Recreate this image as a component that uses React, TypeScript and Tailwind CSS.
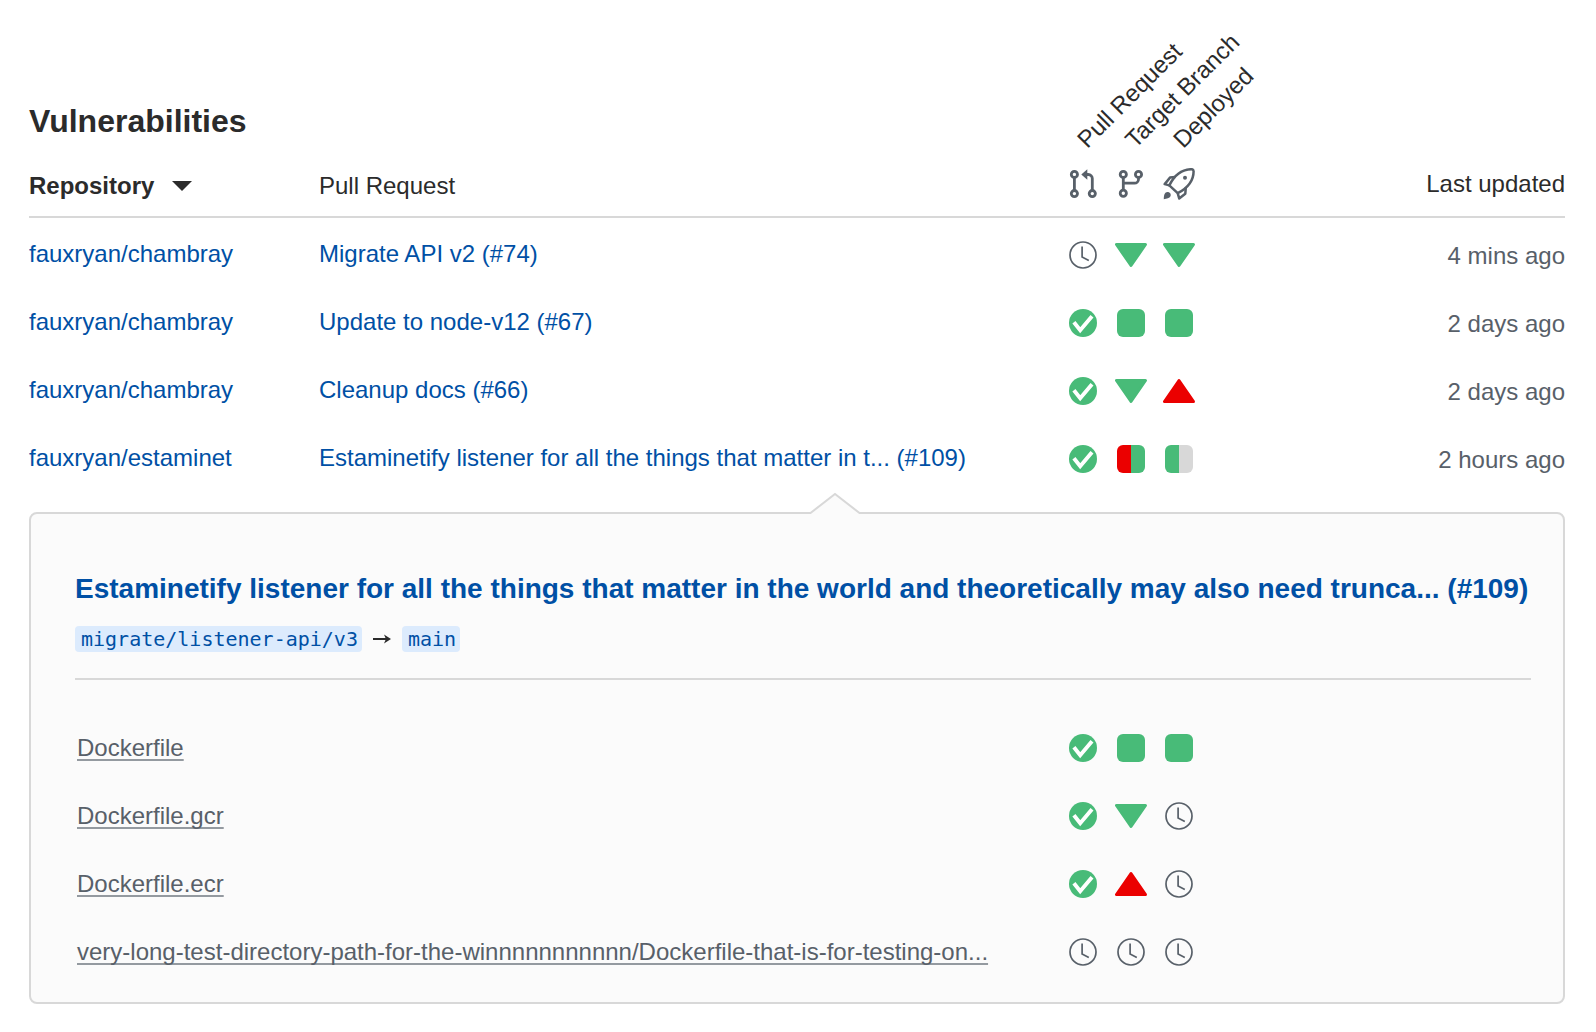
import type { ReactNode } from "react";

type Status = "clock" | "check" | "down" | "up" | "square" | "redGreen" | "greenGray";

function ClockIcon() {
  return (
    <svg width="28" height="28" viewBox="0 0 28 28" fill="none" stroke="#586069" strokeWidth="1.7" role="img" aria-label="Pending">
      <circle cx="14" cy="14" r="13" />
      <path d="M13.1 5.6V16l6.7 3.4" />
    </svg>
  );
}

function CheckIcon() {
  return (
    <svg width="28" height="28" viewBox="0 0 28 28" fill="none" role="img" aria-label="Passed">
      <circle cx="14" cy="14" r="14" fill="#48bb78" />
      <path d="M4.900 13.200l6.300 8L23 7.200" stroke="#fff" strokeWidth="3.900" />
    </svg>
  );
}

function TriangleIcon({ up = false }: { up?: boolean }) {
  return (
    <svg width="32" height="26" viewBox="0 0 32 26" role="img" aria-label={up ? "Increased" : "Decreased"}>
      {up ? (
        <path d="M1.500 23.500h29L16 2.500z" fill="#eb0000" stroke="#eb0000" strokeWidth="3" strokeLinejoin="round" />
      ) : (
        <path d="M1.500 2.500h29L16 23.500z" fill="#48bb78" stroke="#48bb78" strokeWidth="3" strokeLinejoin="round" />
      )}
    </svg>
  );
}

function StatusIcon({ status }: { status: Status }) {
  switch (status) {
    case "clock":
      return <ClockIcon />;
    case "check":
      return <CheckIcon />;
    case "down":
      return <TriangleIcon />;
    case "up":
      return <TriangleIcon up />;
    case "square":
      return <span className="block size-7 rounded-md bg-[#48bb78]" />;
    case "redGreen":
      return (
        <span className="flex size-7 overflow-hidden rounded-md">
          <span className="w-1/2 bg-[#eb0000]" />
          <span className="w-1/2 bg-[#48bb78]" />
        </span>
      );
    case "greenGray":
      return (
        <span className="flex size-7 overflow-hidden rounded-md">
          <span className="w-1/2 bg-[#48bb78]" />
          <span className="w-1/2 bg-[#d8d8d8]" />
        </span>
      );
  }
}

function PullRequestIcon() {
  return (
    <svg width="32" height="32" viewBox="0 0 32 32" fill="none" stroke="#586069" strokeWidth="2.8" aria-hidden="true">
      <circle cx="7.4" cy="6.4" r="3.1" />
      <circle cx="7.4" cy="25.6" r="3.1" />
      <circle cx="25.3" cy="25.6" r="3.1" />
      <path d="M7.4 9v14M25.3 23V10.5a4 4 0 0 0-4-4H19" />
      <path d="M14.3 6.5l6-5.3v10.6z" fill="#586069" stroke="none" />
    </svg>
  );
}

function BranchIcon() {
  return (
    <svg width="32" height="32" viewBox="0 0 32 32" fill="none" stroke="#586069" strokeWidth="2.8" aria-hidden="true">
      <circle cx="8.3" cy="6.4" r="3.1" />
      <circle cx="8.3" cy="25.2" r="3.1" />
      <circle cx="23.5" cy="6.4" r="3.1" />
      <path d="M8.3 9v13.5M23.5 9v2.2a4 4 0 0 1-4 4H8.3" />
    </svg>
  );
}

function RocketIcon() {
  return (
    <svg width="32" height="32" viewBox="0 0 32 32" fill="none" stroke="#586069" strokeWidth="2.5" strokeLinejoin="round" aria-hidden="true">
      <path d="M6.3 17.4C10.2 9.4 16.5 1.4 28.5 1.2q2 0 2.1 2C30.6 13 23.5 20.6 14.7 25.2z" />
      <path d="M12.2 8.9L7 9.6 1.7 16.1l4.6 1.3M22.8 19.6l-.5 6.1-6.1 4.7-1.5-5.2" />
      <circle cx="22" cy="9.7" r="2" fill="#586069" stroke="none" />
      <path d="M.8 31.2c.1-4.2.9-7.2 3.7-7.2 2.4 0 3.9 2.2 3 4.3-.9 2.1-3.7 2.4-6.7 2.9z" fill="#586069" stroke="none" />
    </svg>
  );
}

const rows: { repo: string; title: string; statuses: Status[]; updated: string }[] = [
  { repo: "fauxryan/chambray", title: "Migrate API v2 (#74)", statuses: ["clock", "down", "down"], updated: "4 mins ago" },
  { repo: "fauxryan/chambray", title: "Update to node-v12 (#67)", statuses: ["check", "square", "square"], updated: "2 days ago" },
  { repo: "fauxryan/chambray", title: "Cleanup docs (#66)", statuses: ["check", "down", "up"], updated: "2 days ago" },
  {
    repo: "fauxryan/estaminet",
    title: "Estaminetify listener for all the things that matter in t... (#109)",
    statuses: ["check", "redGreen", "greenGray"],
    updated: "2 hours ago",
  },
];

const files: { name: string; statuses: Status[] }[] = [
  { name: "Dockerfile", statuses: ["check", "square", "square"] },
  { name: "Dockerfile.gcr", statuses: ["check", "down", "clock"] },
  { name: "Dockerfile.ecr", statuses: ["check", "up", "clock"] },
  {
    name: "very-long-test-directory-path-for-the-winnnnnnnnnnn/Dockerfile-that-is-for-testing-on...",
    statuses: ["clock", "clock", "clock"],
  },
];

function StageHeader({ label, children }: { label: string; children: ReactNode }) {
  return (
    <th scope="col" className="relative pb-4 align-bottom font-normal">
      <span className="absolute bottom-16 left-[31px] origin-bottom-left -rotate-45 leading-6 whitespace-nowrap">{label}</span>
      <span className="flex justify-center">{children}</span>
    </th>
  );
}

function Code({ children }: { children: ReactNode }) {
  return (
    <code className="rounded bg-[#dcebfd] pr-1 pl-1.5 font-['DejaVu_Sans_Mono',monospace] text-xl leading-[26px] text-[#0050a5]">
      {children}
    </code>
  );
}

export default function App() {
  return (
    <main className="min-h-screen bg-white pt-[101px] pr-[31px] pb-7 pl-[29px] font-['Liberation_Sans',Arial,sans-serif] text-2xl text-[#2b2b2b]">
      <h1 className="text-[32px] leading-10 font-bold">Vulnerabilities</h1>

      <table className="w-full table-fixed border-separate border-spacing-0 leading-8">
        <colgroup>
          <col className="w-[290px]" />
          <col />
          <col className="w-12" />
          <col className="w-12" />
          <col className="w-12" />
          <col className="w-[362px]" />
        </colgroup>
        <thead>
          <tr className="h-[77px] text-left [&>th]:border-b-2 [&>th]:border-[#d8d8d8]">
            <th scope="col" className="pb-3.5 align-bottom font-bold" aria-sort="descending">
              <button type="button" className="flex items-center gap-[18px]">
                Repository
                <svg width="20" height="10" viewBox="0 0 20 10" aria-hidden="true">
                  <path d="M0 0h20L10 10z" fill="#2b2b2b" />
                </svg>
              </button>
            </th>
            <th scope="col" className="pb-3.5 align-bottom font-normal">
              Pull Request
            </th>
            <StageHeader label="Pull Request">
              <PullRequestIcon />
            </StageHeader>
            <StageHeader label="Target Branch">
              <BranchIcon />
            </StageHeader>
            <StageHeader label="Deployed">
              <RocketIcon />
            </StageHeader>
            <th scope="col" className="pb-4 text-right align-bottom font-normal">
              Last updated
            </th>
          </tr>
        </thead>
        <tbody>
          {rows.map((row) => (
            <tr key={row.title} className="h-[68px]">
              <td className="pt-1 text-[#0050a5]">
                <a href="#repository">{row.repo}</a>
              </td>
              <td className="pt-1 whitespace-nowrap text-[#0050a5]">
                <a href="#pull-request">{row.title}</a>
              </td>
              {row.statuses.map((status, i) => (
                <td key={i} className="pt-1.5">
                  <div className="flex justify-center">
                    <StatusIcon status={status} />
                  </div>
                </td>
              ))}
              <td className="pt-2 text-right text-[#586069]">{row.updated}</td>
            </tr>
          ))}
        </tbody>
      </table>

      <section className="relative mt-[22px] rounded-lg border-2 border-[#d8d8d8] bg-[#fbfbfb] pt-[57px] pr-8 pb-4 pl-11">
        <svg width="52" height="23" viewBox="0 0 52 23" className="absolute -top-[22px] left-[778px]" aria-hidden="true">
          <path d="M1 23v-2L26 1.5 51 21v2z" fill="#fbfbfb" />
          <path d="M0 21h1.500L26 2l24.500 19H52" fill="none" stroke="#d8d8d8" strokeWidth="2" />
        </svg>
        <h2 className="text-[28px] leading-9 font-bold whitespace-nowrap text-[#0050a5]">
          <a href="#pull-request">
            Estaminetify listener for all the things that matter in the world and theoretically may also need trunca... (#109)
          </a>
        </h2>
        <div className="mt-[19px] flex items-center border-b-2 border-[#d8d8d8] pb-[26px]">
          <Code>migrate/listener-api/v3</Code>
          <svg width="18" height="10" viewBox="0 0 18 10" className="mx-[11px]" aria-label="into" role="img">
            <path d="M0 4h12.500L11 .5l7 4.500-7 4.500 1.500-3.500H0z" fill="#2b2b2b" />
          </svg>
          <Code>main</Code>
        </div>
        <table className="mt-[34px] w-full table-fixed border-separate border-spacing-0 leading-8">
          <colgroup>
            <col />
            <col className="w-12" />
            <col className="w-12" />
            <col className="w-12" />
            <col className="w-[328px]" />
          </colgroup>
          <tbody>
            {files.map((file) => (
              <tr key={file.name} className="h-[68px]">
                <td className="pl-0.5 whitespace-nowrap text-[#586069]">
                  <a
                    href="#file"
                    className="underline decoration-[#949aa0] decoration-2 underline-offset-3 [text-decoration-skip-ink:none]"
                  >
                    {file.name}
                  </a>
                </td>
                {file.statuses.map((status, i) => (
                  <td key={i}>
                    <div className="flex justify-center">
                      <StatusIcon status={status} />
                    </div>
                  </td>
                ))}
                <td />
              </tr>
            ))}
          </tbody>
        </table>
      </section>
    </main>
  );
}
